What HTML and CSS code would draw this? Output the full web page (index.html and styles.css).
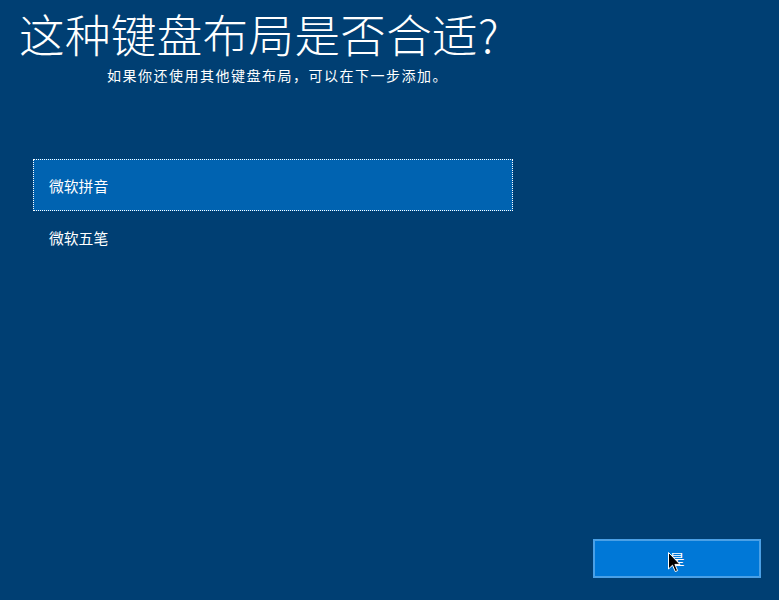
FILE: index.html
```html
<!DOCTYPE html>
<html lang="zh-CN">
<head>
<meta charset="utf-8">
<link rel="stylesheet" href="styles.css">
</head>
<body>
<div class="page">
  <h1 class="title">这种键盘布局是否合适?</h1>
  <p class="subtitle">如果你还使用其他键盘布局，可以在下一步添加。</p>
  <ul class="list">
    <li class="item selected">微软拼音</li>
    <li class="item">微软五笔</li>
  </ul>
  <div class="footer">
    <button class="btn">是</button>
  </div>
  <svg class="cursor" width="13" height="21" viewBox="0 0 13 21">
    <path d="M0.5 0.5 L0.5 17 L4.5 13.2 L7.3 19.6 L9.6 18.6 L6.9 12.4 L12 12.4 Z" fill="#000" stroke="#fff" stroke-width="1"/>
  </svg>
</div>
</body>
</html>
```
FILE: styles.css
```css
html, body {
  margin: 0;
  padding: 0;
}
body {
  background: #003f73;
  color: #fff;
  font-family: "Noto Sans CJK SC", "Noto Sans", sans-serif;
  width: 779px;
  height: 600px;
  overflow: hidden;
}
.page {
  position: relative;
  width: 779px;
  height: 600px;
  display: flex;
  flex-direction: column;
}
.title {
  margin: 0;
  padding: 4px 0 0 19px;
  font-size: 45.5px;
  font-weight: 300;
  line-height: 58px;
  letter-spacing: 0.4px;
}
.subtitle {
  margin: 0;
  padding: 4px 0 0 107px;
  font-size: 14px;
  line-height: 18px;
  letter-spacing: 1.5px;
}
.list {
  list-style: none;
  margin: 75px 0 0 33px;
  padding: 0;
  width: 480px;
}
.item {
  height: 52px;
  box-sizing: border-box;
  padding-left: 15px;
  display: flex;
  align-items: center;
  font-size: 14.8px;
  border: 1px dotted transparent;
}
.item.selected {
  background: #0063b1;
  border-color: #fff;
}
.footer {
  margin-top: auto;
  display: flex;
  justify-content: flex-end;
  padding: 0 18px 22px 0;
}
.btn {
  width: 168px;
  height: 39px;
  box-sizing: border-box;
  background: #0078d7;
  border: 2px solid #4aa0e6;
  color: #fff;
  font-family: "Noto Sans CJK SC", sans-serif;
  font-size: 15px;
  padding: 0;
}
.cursor {
  position: absolute;
  left: 668px;
  top: 552px;
}
```
